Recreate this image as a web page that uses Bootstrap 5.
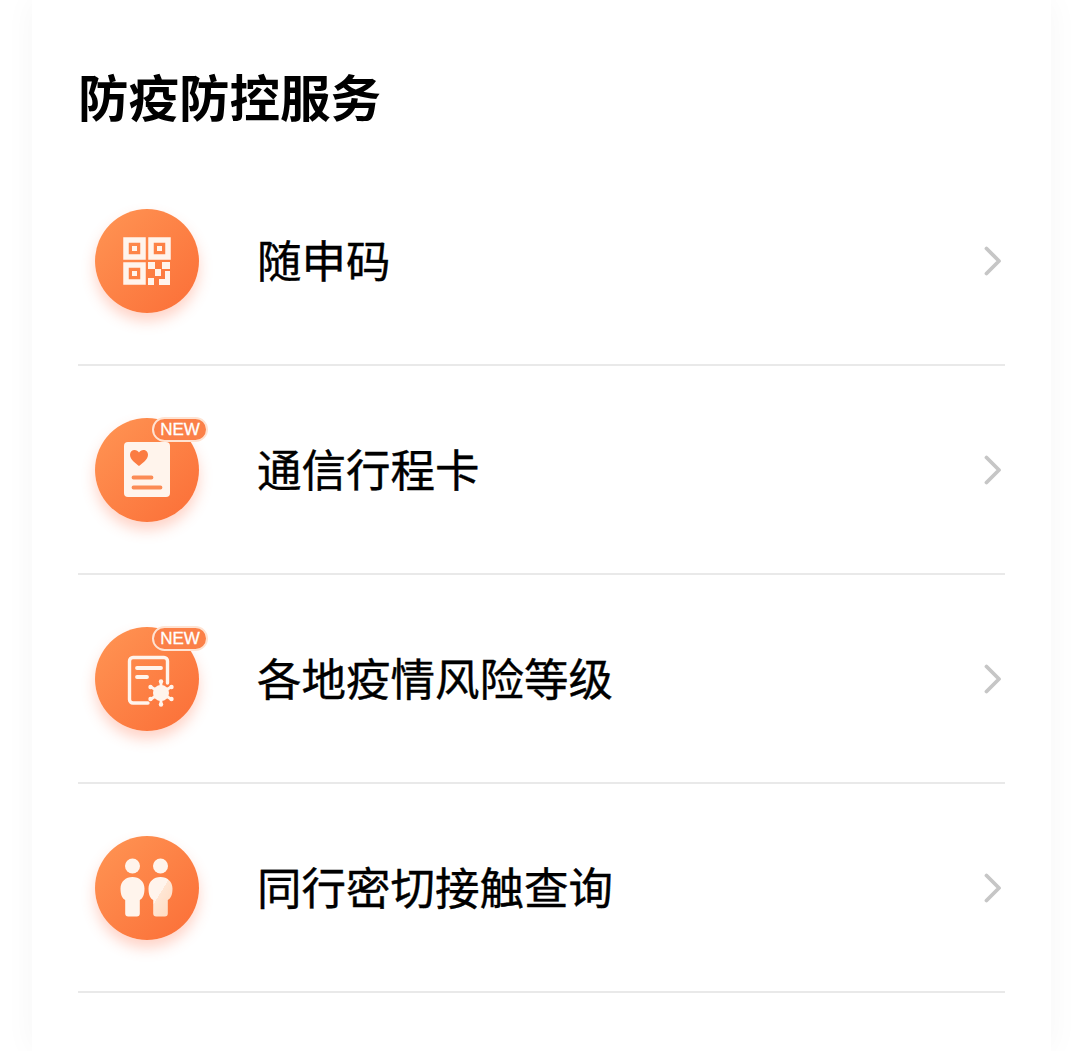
<!DOCTYPE html>
<html lang="zh-CN">
<head>
    <meta charset="UTF-8">
    <meta name="viewport" content="width=device-width, initial-scale=1.0">
    <title>防疫防控服务</title>
    <link href="https://cdn.jsdelivr.net/npm/bootstrap@5.3.0/dist/css/bootstrap.min.css" rel="stylesheet">
    <style>
        body {
            background: #fff;
            font-family: "Noto Sans CJK SC", "Liberation Sans", sans-serif;
            color: #000;
            height: 1051px;
            overflow: hidden;
        }

        .page-wrap {
            padding: 0 29px 0 32px;
        }

        .service-panel {
            background: #fff;
            height: 1051px;
            padding: 65px 46px 0 46px;
            box-shadow: 0 0 30px rgba(0, 0, 0, .04);
        }

        .panel-title {
            font-size: 50.500px;
            line-height: 60px;
            font-weight: 700;
            margin: 0 0 32px;
        }

        .service-row {
            height: 209px;
            padding: 0 3px 0 17px;
            border-bottom: 2px solid #e9e9e9;
        }

        .service-row span.service-name {
            font-size: 44.500px;
            line-height: 60px;
            font-weight: 400;
            -webkit-text-stroke: .4px #000;
            margin: 0 0 4px 58px;
            flex-grow: 1;
        }

        .service-icon {
            width: 104px;
            height: 104px;
            border-radius: 50%;
            background: linear-gradient(135deg, #ff9554 0%, #fb6e37 100%);
            box-shadow: 0 8px 14px rgba(255, 110, 70, .3);
            flex-shrink: 0;
        }

        .service-icon svg {
            display: block;
        }

        .new-tag {
            position: absolute;
            top: -1px;
            left: 57px;
            width: 56px;
            height: 25px;
            border-radius: 13px;
            background: #fb8048;
            border: 2px solid #ffe3d2;
            color: #fff;
            font-family: "Liberation Sans", sans-serif;
            font-size: 17px;
            -webkit-text-stroke: .3px #fff;
            line-height: 22px;
            text-align: center;
        }
    </style>
</head>

<body>
    <div class="page-wrap">
        <div class="service-panel">
            <h1 class="panel-title">防疫防控服务</h1>

            <div class="service-row d-flex align-items-center">
                <div class="service-icon position-relative">
                    <svg width="104" height="104" viewBox="0 0 104 104">
                        <g fill="none" stroke="#fff4ec" stroke-width="5.500">
                            <rect x="31" y="31" width="17" height="17"/>
                            <rect x="56" y="31" width="17" height="17"/>
                            <rect x="31" y="56" width="17" height="17"/>
                        </g>
                        <g fill="#fff4ec">
                            <rect x="37" y="37" width="5" height="5"/>
                            <rect x="62" y="37" width="5" height="5"/>
                            <rect x="37" y="62" width="5" height="5"/>
                            <rect x="53" y="53" width="7" height="7"/>
                            <rect x="67" y="53" width="8" height="7"/>
                            <rect x="60" y="60" width="6" height="7"/>
                            <rect x="70" y="62" width="5" height="13"/>
                            <rect x="53" y="69" width="6" height="7"/>
                            <rect x="64" y="70" width="11" height="6"/>
                        </g>
                    </svg>
                </div>
                <span class="service-name">随申码</span>
                <svg width="18" height="30" viewBox="0 0 18 30" fill="none" stroke="#c6c6c6" stroke-width="3.800" stroke-linecap="round" stroke-linejoin="round"><path d="M2.500 2.500L15 15 2.500 27.500"/></svg>
            </div>

            <div class="service-row d-flex align-items-center">
                <div class="service-icon position-relative">
                    <svg width="104" height="104" viewBox="0 0 104 104">
                        <rect x="29" y="24" width="46" height="55" rx="4" fill="#fff4ec"/>
                        <path d="M44 48c-3.300-2.800-9-6.300-9-11.300 0-2.800 2.100-4.700 4.600-4.700 1.900 0 3.400 1 4.400 2.500 1-1.500 2.500-2.500 4.400-2.500 2.500 0 4.600 1.900 4.600 4.700 0 5-5.700 8.500-9 11.300z" fill="#fb7c42"/>
                        <path d="M38.500 59.500h18M38.500 69.500h27" stroke="#fb8b55" stroke-width="3.800" stroke-linecap="round"/>
                    </svg>
                    <span class="new-tag">NEW</span>
                </div>
                <span class="service-name">通信行程卡</span>
                <svg width="18" height="30" viewBox="0 0 18 30" fill="none" stroke="#c6c6c6" stroke-width="3.800" stroke-linecap="round" stroke-linejoin="round"><path d="M2.500 2.500L15 15 2.500 27.500"/></svg>
            </div>

            <div class="service-row d-flex align-items-center">
                <div class="service-icon position-relative">
                    <svg width="104" height="104" viewBox="0 0 104 104">
                        <path d="M53 76H38a3.500 3.500 0 0 1-3.500-3.500V34a3.500 3.500 0 0 1 3.500-3.500h31a3.500 3.500 0 0 1 3.500 3.500v22" fill="none" stroke="#fff4ec" stroke-width="3.400" stroke-linecap="round"/>
                        <path d="M42 41h24M42 50h10" fill="none" stroke="#fff4ec" stroke-width="3.800" stroke-linecap="round"/>
                        <circle cx="66" cy="66" r="8" fill="#fff4ec"/>
                        <g stroke="#fff4ec" stroke-width="2.800" stroke-linecap="round">
                            <path d="M66 55v22M56 60l20 12M56 72l20-12"/>
                        </g>
                        <g fill="#fff4ec">
                            <circle cx="66" cy="54.500" r="2.200"/>
                            <circle cx="66" cy="77.500" r="2.200"/>
                            <circle cx="55.500" cy="60" r="2.200"/>
                            <circle cx="76.500" cy="60" r="2.200"/>
                            <circle cx="55.500" cy="72" r="2.200"/>
                            <circle cx="76.500" cy="72" r="2.200"/>
                        </g>
                    </svg>
                    <span class="new-tag">NEW</span>
                </div>
                <span class="service-name">各地疫情风险等级</span>
                <svg width="18" height="30" viewBox="0 0 18 30" fill="none" stroke="#c6c6c6" stroke-width="3.800" stroke-linecap="round" stroke-linejoin="round"><path d="M2.500 2.500L15 15 2.500 27.500"/></svg>
            </div>

            <div class="service-row d-flex align-items-center">
                <div class="service-icon position-relative">
                    <svg width="104" height="104" viewBox="0 0 104 104">
                        <defs>
                            <linearGradient id="bodyTint" x1="0" y1="0" x2="1" y2="1">
                                <stop offset="0" stop-color="#fff4ec"/>
                                <stop offset=".45" stop-color="#fff4ec"/>
                                <stop offset=".45" stop-color="#ffe6d4"/>
                                <stop offset="1" stop-color="#ffd9bf"/>
                            </linearGradient>
                        </defs>
                        <circle cx="37.500" cy="30" r="7.500" fill="#fff4ec"/>
                        <circle cx="65.500" cy="30" r="7.500" fill="#fff4ec"/>
                        <path d="M37.500 41c6.800 0 12 4.500 12 11.500 0 6.500-1.700 9.800-4.700 11.500v13.500a3 3 0 0 1-3 3h-8.600a3 3 0 0 1-3-3V64c-3-1.700-4.700-5-4.700-11.500 0-7 5.200-11.500 12-11.500z" fill="#fff4ec"/>
                        <path d="M65.500 41c6.800 0 12 4.500 12 11.500 0 6.500-1.700 9.800-4.700 11.500v13.500a3 3 0 0 1-3 3h-8.600a3 3 0 0 1-3-3V64c-3-1.700-4.700-5-4.700-11.500 0-7 5.200-11.500 12-11.500z" fill="url(#bodyTint)"/>
                    </svg>
                </div>
                <span class="service-name">同行密切接触查询</span>
                <svg width="18" height="30" viewBox="0 0 18 30" fill="none" stroke="#c6c6c6" stroke-width="3.800" stroke-linecap="round" stroke-linejoin="round"><path d="M2.500 2.500L15 15 2.500 27.500"/></svg>
            </div>
        </div>
    </div>
    <script src="https://cdn.jsdelivr.net/npm/bootstrap@5.3.0/dist/js/bootstrap.bundle.min.js"></script>
</body>

</html>
